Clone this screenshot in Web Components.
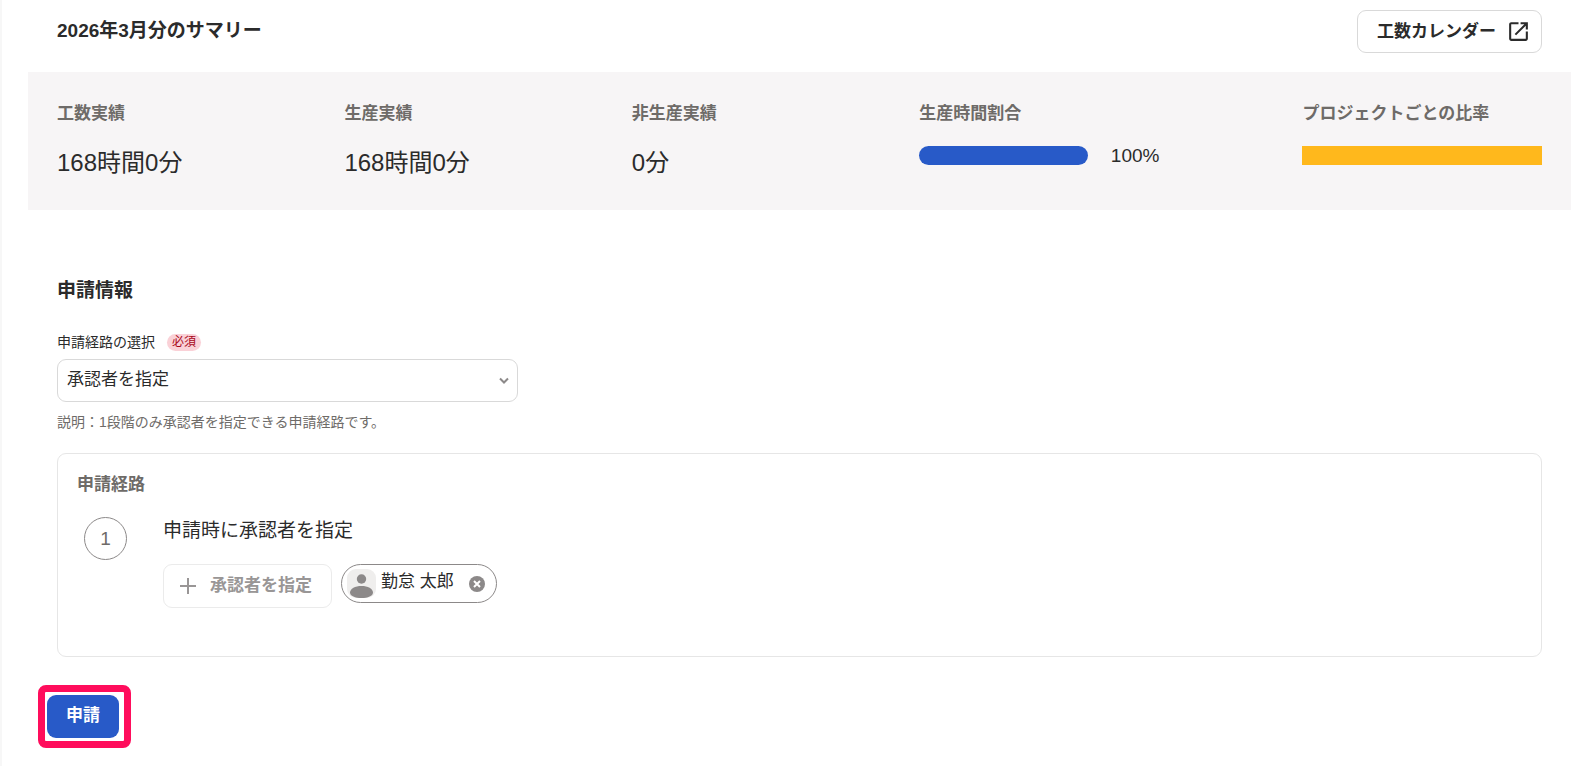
<!DOCTYPE html>
<html lang="ja">
<head>
<meta charset="utf-8">
<meta name="viewport" content="width=device-width, initial-scale=1">
<title>工数サマリー</title>
<style>
  body {
    margin: 0;
    background: #fff;
    color: #2b2b2b;
    font-family: "Liberation Sans", "Noto Sans CJK JP", sans-serif;
    font-size: 17px;
    line-height: 24px;
  }
</style>
</head>
<body>
<monthly-page></monthly-page>

<script>
class SummaryItem extends HTMLElement {
  constructor() {
    super();
    this.attachShadow({ mode: "open" }).innerHTML = `
    <style>
      :host {
        display: block;
      }
      h3 {
        margin: 0 0 19px;
        font-size: 17px;
        line-height: 24px;
        color: #6e6b68;
      }
      div {
        font-size: 24px;
        line-height: 36px;
      }
    </style>
    <h3>${this.getAttribute("label")}</h3>
    <div><slot></slot></div>
    `;
  }
}

class RatioBar extends HTMLElement {
  constructor() {
    super();
    this.attachShadow({ mode: "open" }).innerHTML = `
    <style>
      :host {
        display: flex;
        align-items: center;
        gap: 23px;
        height: 21px;
        font-size: 19px;
        line-height: 21px;
      }
      .bar {
        flex: 1;
        height: 19px;
        background: #285ac8;
      }
      :host([rounded]) .bar {
        flex: 0 0 44%;
        border-radius: 10px;
      }
      :host([project]) .bar {
        background: #ffb81c;
      }
    </style>
    <div class="bar"></div>
    <slot></slot>
    `;
  }
}

class MonthlySummary extends HTMLElement {
  constructor() {
    super();
    this.attachShadow({ mode: "open" }).innerHTML = `
    <style>
      :host {
        display: block;
      }
      header {
        display: flex;
        align-items: flex-start;
        justify-content: space-between;
        padding: 10px 29px 19px;
      }
      h2 {
        margin: 7px 0 0;
        font-size: 19px;
        line-height: 28px;
      }
      a {
        box-sizing: border-box;
        display: flex;
        align-items: center;
        gap: 10px;
        height: 43px;
        padding: 0 10px 0 19px;
        border: 1px solid #d9d9d9;
        border-radius: 9px;
        color: inherit;
        font-weight: bold;
        text-decoration: none;
      }
      .band {
        display: grid;
        grid-template-columns: 6fr 6fr 6fr 8fr 5fr;
        padding: 30px 29px 29px;
        background: #f7f5f6;
      }
    </style>
    <header>
      <h2>2026年3月分のサマリー</h2>
      <a href="#calendar">工数カレンダー
        <svg width="25" height="25" viewBox="0 0 24 24" fill="#2b2b2b" aria-hidden="true">
          <path d="M5 21q-.8 0-1.400-.6T3 19V5q0-.8.600-1.400T5 3h7v2H5v14h14v-7h2v7q0 .8-.6 1.400T19 21H5Zm4.700-5.300-1.400-1.400L17.600 5H14V3h7v7h-2V6.400l-9.300 9.300Z"/>
        </svg>
      </a>
    </header>
    <div class="band">
      <summary-item label="工数実績">168時間0分</summary-item>
      <summary-item label="生産実績">168時間0分</summary-item>
      <summary-item label="非生産実績">0分</summary-item>
      <summary-item label="生産時間割合"><ratio-bar rounded>100%</ratio-bar></summary-item>
      <summary-item label="プロジェクトごとの比率"><ratio-bar project></ratio-bar></summary-item>
    </div>
    `;
  }
}

class RouteSelect extends HTMLElement {
  constructor() {
    super();
    this.attachShadow({ mode: "open" }).innerHTML = `
    <style>
      :host {
        display: block;
      }
      .caption {
        display: flex;
        align-items: center;
        gap: 12px;
        margin-bottom: 5px;
        font-size: 14px;
        line-height: 24px;
      }
      .required {
        padding: 0 5px;
        border-radius: 9px;
        background: #fad1d7;
        color: #a8071a;
        font-size: 12px;
        line-height: 17px;
      }
      .box {
        position: relative;
        max-width: 461px;
      }
      select {
        box-sizing: border-box;
        display: block;
        width: 100%;
        height: 43px;
        padding: 0 32px 1px 9px;
        border: 1px solid #d9d9d9;
        border-radius: 9px;
        background: #fff;
        color: inherit;
        font: inherit;
        appearance: none;
      }
      svg {
        position: absolute;
        right: 9px;
        top: 18px;
        pointer-events: none;
      }
      p {
        margin: 8px 0 0;
        color: #6e6b68;
        font-size: 14px;
        line-height: 24px;
      }
    </style>
    <div class="caption">
      <label for="route">申請経路の選択</label>
      <span class="required">必須</span>
    </div>
    <div class="box">
      <select id="route"><option>承認者を指定</option></select>
      <svg width="10" height="8" viewBox="0 0 10 8" fill="none" stroke="#8c8989" stroke-width="2" aria-hidden="true">
        <path d="M1 1.500 5 5.500 9 1.500"/>
      </svg>
    </div>
    <p><slot></slot></p>
    `;
  }
}

class ApproverChip extends HTMLElement {
  constructor() {
    super();
    this.attachShadow({ mode: "open" }).innerHTML = `
    <style>
      :host {
        box-sizing: border-box;
        display: flex;
        align-items: center;
        height: 39px;
        padding: 0 10px 0 5px;
        border: 1px solid #8c8989;
        border-radius: 20px;
      }
      .name {
        margin: 0 14px 4px 5px;
      }
      button {
        display: flex;
        padding: 0;
        border: 0;
        background: none;
      }
    </style>
    <svg width="29" height="29" viewBox="0 0 29 29" aria-hidden="true">
      <rect width="29" height="29" rx="9" fill="#efeeed"/>
      <circle cx="14.500" cy="10" r="4.700" fill="#8c8989"/>
      <path d="M3 23.500c0-3.800 5.200-6.500 11.500-6.500S26 19.700 26 23.500c0 3.600-5.200 5.500-11.500 5.500S3 27.100 3 23.500Z" fill="#8c8989"/>
    </svg>
    <span class="name"><slot></slot></span>
    <button type="button" aria-label="削除">
      <svg width="18" height="18" viewBox="0 0 18 18">
        <circle cx="9" cy="9" r="8" fill="#8c8989"/>
        <path d="m6 6 6 6m0-6-6 6" stroke="#fff" stroke-width="2"/>
      </svg>
    </button>
    `;
  }
}

class RouteStep extends HTMLElement {
  constructor() {
    super();
    this.attachShadow({ mode: "open" }).innerHTML = `
    <style>
      :host {
        display: flex;
        gap: 36px;
      }
      .number {
        box-sizing: border-box;
        width: 43px;
        height: 43px;
        border: 1px solid #8c8989;
        border-radius: 50%;
        color: #6e6b68;
        font-size: 19px;
        line-height: 41px;
        text-align: center;
      }
      h4 {
        margin: 0 0 20px;
        font-size: 19px;
        font-weight: normal;
        line-height: 27px;
      }
      .approvers {
        display: flex;
        align-items: flex-start;
        gap: 9px;
      }
      .add {
        display: flex;
        align-items: center;
        gap: 14px;
        height: 44px;
        padding: 0 19px 1px 16px;
        border: 1px solid #ebebeb;
        border-radius: 9px;
        background: #fff;
        color: #999696;
        font: inherit;
        font-weight: bold;
      }
    </style>
    <div class="number">${this.getAttribute("number")}</div>
    <div>
      <h4>${this.getAttribute("heading")}</h4>
      <div class="approvers">
        <button class="add" type="button" disabled>
          <svg width="16" height="16" viewBox="0 0 16 16" stroke="#999696" stroke-width="2" aria-hidden="true">
            <path d="M8 0v16M0 8h16"/>
          </svg>
          承認者を指定
        </button>
        <slot></slot>
      </div>
    </div>
    `;
  }
}

class RouteCard extends HTMLElement {
  constructor() {
    super();
    this.attachShadow({ mode: "open" }).innerHTML = `
    <style>
      :host {
        display: block;
        padding: 19px 19px 48px;
        border: 1px solid #e6e6e6;
        border-radius: 9px;
      }
      h3 {
        margin: 0 0 20px;
        color: #6e6b68;
        font-size: 17px;
        line-height: 24px;
      }
      .steps {
        padding-left: 7px;
      }
    </style>
    <h3>申請経路</h3>
    <div class="steps"><slot></slot></div>
    `;
  }
}

class SubmitButton extends HTMLElement {
  constructor() {
    super();
    this.attachShadow({ mode: "open" }).innerHTML = `
    <style>
      :host {
        display: block;
        width: fit-content;
        padding: 3px 5px 3px 2px;
        border: 7px solid #ff0d5c;
        border-radius: 8px;
      }
      button {
        display: block;
        height: 43px;
        padding: 0 19px 1px;
        border: 0;
        border-radius: 9px;
        background: #285ac8;
        color: #fff;
        font: inherit;
        font-weight: bold;
      }
    </style>
    <button type="button"><slot></slot></button>
    `;
  }
}

class MonthlyPage extends HTMLElement {
  constructor() {
    super();
    this.attachShadow({ mode: "open" }).innerHTML = `
    <style>
      :host {
        box-sizing: border-box;
        display: block;
        min-height: 100vh;
        padding: 0 22px 18px 26px;
        border-left: 2px solid #f7f7f7;
      }
      section {
        padding: 67px 29px 28px;
      }
      h2 {
        margin: 0 0 25px;
        font-size: 19px;
        line-height: 28px;
      }
      route-card {
        margin-top: 19px;
      }
      submit-button {
        margin-left: 10px;
      }
    </style>
    <monthly-summary></monthly-summary>
    <section>
      <h2>申請情報</h2>
      <route-select>説明：1段階のみ承認者を指定できる申請経路です。</route-select>
      <route-card>
        <route-step number="1" heading="申請時に承認者を指定">
          <approver-chip>勤怠 太郎</approver-chip>
        </route-step>
      </route-card>
    </section>
    <submit-button>申請</submit-button>
    `;
  }
}

customElements.define("summary-item", SummaryItem);
customElements.define("ratio-bar", RatioBar);
customElements.define("monthly-summary", MonthlySummary);
customElements.define("route-select", RouteSelect);
customElements.define("approver-chip", ApproverChip);
customElements.define("route-step", RouteStep);
customElements.define("route-card", RouteCard);
customElements.define("submit-button", SubmitButton);
customElements.define("monthly-page", MonthlyPage);
</script>
</body>
</html>
